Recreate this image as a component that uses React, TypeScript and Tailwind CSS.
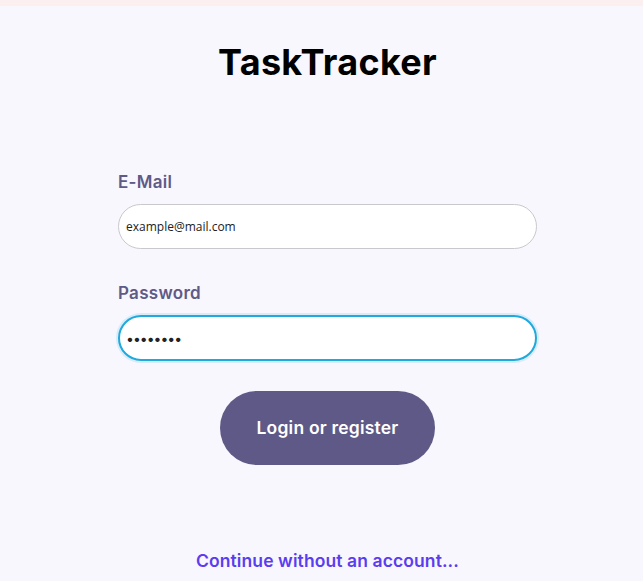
export default function App() {
  return (
    <div
      className="min-h-[581px] bg-[#f8f7fd]"
      style={{ fontFamily: "Inter, 'Noto Sans', sans-serif" }}
    >
      <div className="h-[6px] bg-[#fbefef]" />
      <div className="pl-[12px]">
        <h1 className="pt-[34px] text-center text-[36px] font-bold leading-[44px] tracking-[0.3px] text-black">
          TaskTracker
        </h1>
        <form className="mx-auto mt-[88px] flex w-[419px] flex-col">
          <label className="text-[17px] font-semibold leading-5 tracking-[0.3px] text-[#5f5a87]">E-Mail</label>
          <input
            type="text"
            defaultValue="example@mail.com"
            className="mt-[12px] h-[45px] w-full rounded-full border border-[#c9c9cc] bg-white px-[7px] text-[12px] text-[#222] outline-none"
            style={{ fontFamily: "'Open Sans', sans-serif" }}
          />
          <label className="mt-[34px] text-[17px] font-semibold leading-5 tracking-[0.3px] text-[#5f5a87]">Password</label>
          <input
            type="password"
            defaultValue="password"
            className="mt-[12px] h-[46px] w-full rounded-full border-2 border-[#1fa9dc] bg-white px-[6px] text-[14px] tracking-[-1px] text-[#222] shadow-[0_0_0_2px_rgba(31,169,220,0.15)] outline-none"
          />
          <button
            type="button"
            className="mx-auto mt-[30px] h-[74px] w-[215px] rounded-full bg-[#5e5986] text-[17.5px] font-semibold tracking-[0.2px] text-white"
          >
            Login or register
          </button>
          <a href="#" className="mt-[83px] text-center text-[17.5px] font-semibold tracking-[0.1px] text-[#5b3df0]">
            Continue without an account...
          </a>
        </form>
      </div>
    </div>
  );
}
